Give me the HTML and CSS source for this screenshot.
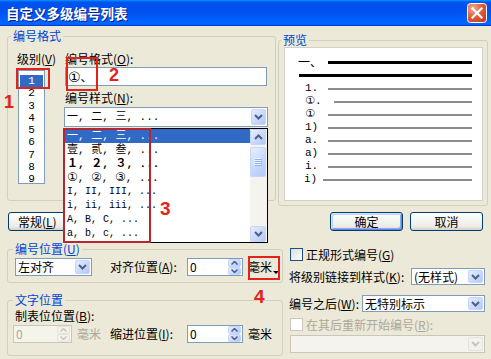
FILE: index.html
```html
<!DOCTYPE html>
<html lang="zh-CN">
<head>
<meta charset="utf-8">
<title>自定义多级编号列表</title>
<link rel="stylesheet" href="styles.css">
</head>
<body>
<div class="window">
  <header class="titlebar">
    <span class="title">自定义多级编号列表</span>
    <span class="close" aria-label="关闭">
      <svg width="20" height="20" viewBox="0 0 20 20"><defs><radialGradient id="cg" cx="0.3" cy="0.25" r="0.95"><stop offset="0" stop-color="#F4B09A"/><stop offset="0.45" stop-color="#E2603F"/><stop offset="1" stop-color="#C2371A"/></radialGradient></defs><rect x="0.5" y="0.5" width="19" height="19" rx="3" fill="url(#cg)" stroke="#fff"/><path d="M5.5 5.5L14.5 14.5M14.5 5.5L5.5 14.5" stroke="#fff" stroke-width="2.2" stroke-linecap="square"/></svg>
    </span>
  </header>
  <main class="client">
    <section class="row-top">
      <div class="group g-format">
        <div class="gtitle">编号格式</div>
        <div class="format-body">
          <div class="level-col">
            <div class="lbl">级别(<u>V</u>)</div>
            <ul class="listbox mono">
              <li class="sel">1</li><li>2</li><li>3</li><li>4</li><li>5</li><li>6</li><li>7</li><li>8</li><li>9</li>
            </ul>
          </div>
          <div class="fmt-col">
            <div class="lbl">编号格式(<u>O</u>):</div>
            <div class="textbox"><span class="circ circ-big">①</span>、</div>
            <div class="lbl lbl-style">编号样式(<u>N</u>):</div>
            <div class="combo">
              <span class="mono cjk-item">一, 二, 三, ...</span>
              <span class="ddbtn"><svg width="9" height="6" viewBox="0 0 9 6"><path d="M1 1l3.5 3.5L8 1" fill="none" stroke="#4D6185" stroke-width="2"/></svg></span>
              <div class="dropdown">
                <ul class="dd-items mono">
                  <li class="sel cjk-item">一, 二, 三, ...</li>
                  <li class="cjk-item">壹, 贰, 叁, ...</li>
                  <li class="cjk-item b">１, ２, ３, ...</li>
                  <li class="cjk-item"><span class="circ">①</span>, <span class="circ">②</span>, <span class="circ">③</span>, ...</li>
                  <li>I, II, III, ...</li>
                  <li>i, ii, iii, ...</li>
                  <li>A, B, C, ...</li>
                  <li>a, b, c, ...</li>
                </ul>
                <div class="vscroll">
                  <span class="sbtn"><svg width="9" height="6" viewBox="0 0 9 6"><path d="M1 5l3.5-3.5L8 5" fill="none" stroke="#4D6185" stroke-width="2"/></svg></span>
                  <span class="thumb"><svg width="8" height="8" viewBox="0 0 8 8"><path d="M0 .5h7M0 2.5h7M0 4.5h7M0 6.5h7" stroke="#EEF4FE"/><path d="M1 1.5h7M1 3.5h7M1 5.5h7M1 7.5h7" stroke="#8CB0F8"/></svg></span>
                  <span class="sbtn sdown"><svg width="9" height="6" viewBox="0 0 9 6"><path d="M1 1l3.5 3.5L8 1" fill="none" stroke="#4D6185" stroke-width="2"/></svg></span>
                </div>
              </div>
            </div>
          </div>
        </div>
      </div>
      <div class="group g-preview">
        <div class="gtitle">预览</div>
        <div class="preview mono">
          <div class="pv-head"><span class="pv-lvl1">一、</span><span class="bar bar-thick"></span></div>
          <div class="bar bar-thick bar-full"></div>
          <div class="prow"><span class="pn">1.</span><span class="bar"></span></div>
          <div class="prow"><span class="pn pn-wide"><span class="circ">①</span>.</span><span class="bar"></span></div>
          <div class="prow"><span class="pn"><span class="circ">①</span></span><span class="bar"></span></div>
          <div class="prow"><span class="pn">1)</span><span class="bar"></span></div>
          <div class="prow"><span class="pn">a.</span><span class="bar"></span></div>
          <div class="prow"><span class="pn">a)</span><span class="bar"></span></div>
          <div class="prow"><span class="pn">i.</span><span class="bar"></span></div>
          <div class="prow prow-last"><span class="pn">i)</span><span class="bar"></span></div>
        </div>
      </div>
    </section>

    <section class="row-btns">
      <button class="btn btn-general">常规(<u>L</u>)</button>
      <button class="btn btn-ok">确定</button>
      <button class="btn btn-cancel">取消</button>
    </section>

    <section class="row-bottom">
      <div class="col-left">
        <div class="group g-numpos">
          <div class="gtitle">编号位置(<u>U</u>)</div>
          <div class="numpos-body">
            <div class="select sel-align"><span>左对齐</span><span class="ddbtn"><svg width="9" height="6" viewBox="0 0 9 6"><path d="M1 1l3.5 3.5L8 1" fill="none" stroke="#4D6185" stroke-width="2"/></svg></span></div>
            <span class="flabel">对齐位置(<u>A</u>):</span>
            <div class="spin"><span class="val">0</span><span class="spinbtns"><span><svg width="7" height="4" viewBox="0 0 7 4"><path d="M.5 3.5l3-3 3 3" fill="none" stroke="#4D6185" stroke-width="1.5"/></svg></span><span><svg width="7" height="4" viewBox="0 0 7 4"><path d="M.5 .5l3 3 3-3" fill="none" stroke="#4D6185" stroke-width="1.5"/></svg></span></span></div>
            <span class="unit unit-dd">毫米</span>
          </div>
        </div>
        <div class="group g-textpos">
          <div class="gtitle">文字位置</div>
          <div class="lbl tab-lbl">制表位位置(<u>B</u>):</div>
          <div class="textpos-row">
            <div class="spin spin-tab disabled"><span class="val">0</span><span class="spinbtns off"><span><svg width="7" height="4" viewBox="0 0 7 4"><path d="M.5 3.5l3-3 3 3" fill="none" stroke="#C9C7BA" stroke-width="1.5"/></svg></span><span><svg width="7" height="4" viewBox="0 0 7 4"><path d="M.5 .5l3 3 3-3" fill="none" stroke="#C9C7BA" stroke-width="1.5"/></svg></span></span></div>
            <span class="unit dis">毫米</span>
            <span class="flabel indent-lbl">缩进位置(<u>I</u>):</span>
            <div class="spin"><span class="val">0</span><span class="spinbtns"><span><svg width="7" height="4" viewBox="0 0 7 4"><path d="M.5 3.5l3-3 3 3" fill="none" stroke="#4D6185" stroke-width="1.5"/></svg></span><span><svg width="7" height="4" viewBox="0 0 7 4"><path d="M.5 .5l3 3 3-3" fill="none" stroke="#4D6185" stroke-width="1.5"/></svg></span></span></div>
            <span class="unit">毫米</span>
          </div>
        </div>
      </div>

      <div class="col-right">
        <div class="chk-row"><span class="chk"></span><span>正规形式编号(<u>G</u>)</span></div>
        <div class="field-row link-row"><span>将级别链接到样式(<u>K</u>):</span><div class="select sel-link"><span>(无样式)</span><span class="ddbtn"><svg width="9" height="6" viewBox="0 0 9 6"><path d="M1 1l3.5 3.5L8 1" fill="none" stroke="#4D6185" stroke-width="2"/></svg></span></div></div>
        <div class="field-row after-row"><span>编号之后(<u>W</u>):</span><div class="select sel-after"><span>无特别标示</span><span class="ddbtn"><svg width="9" height="6" viewBox="0 0 9 6"><path d="M1 1l3.5 3.5L8 1" fill="none" stroke="#4D6185" stroke-width="2"/></svg></span></div></div>
        <div class="chk-row chk-row2"><span class="chk disabled"></span><span class="dis">在其后重新开始编号(<u>R</u>):</span></div>
        <div class="select dis-select"><span></span><span class="ddbtn off"><svg width="9" height="6" viewBox="0 0 9 6"><path d="M1 1l3.5 3.5L8 1" fill="none" stroke="#C9C7BA" stroke-width="2"/></svg></span></div>
      </div>
    </section>
  </main>

  <div class="anno-box b1"></div>
  <div class="anno-box b2"></div>
  <div class="anno-box b3"></div>
  <div class="anno-box b4"></div>
  <span class="anno-num n1">1</span>
  <span class="anno-num n2">2</span>
  <span class="anno-num n3">3</span>
  <span class="anno-num n4">4</span>
</div>
</body>
</html>
```
FILE: styles.css
```css
* { box-sizing: border-box; }
html, body { margin: 0; padding: 0; }
body {
  width: 491px; height: 359px; overflow: hidden;
  background: #ECE9D8; color: #000;
  font-family: "Noto Sans CJK SC", "Noto Sans", sans-serif;
  font-size: 12px; line-height: 14px;
}
ul { list-style: none; margin: 0; padding: 0; }
button { font: inherit; color: inherit; padding: 0; margin: 0; }
u { text-decoration: underline; }
.mono { font-family: "Liberation Mono", "Noto Sans CJK SC", monospace; font-size: 11px; }
.circ { font-family: "DejaVu Sans", "Noto Sans CJK SC", sans-serif; font-size: 12px; line-height: 1; }
.circ-big { font-size: 14px; }
.dis { color: #ACA899; }

.window { position: relative; width: 491px; height: 359px; }

/* title bar */
.titlebar {
  height: 26px; display: flex; align-items: center; justify-content: space-between;
  padding: 0 4px 0 6px;
  background: linear-gradient(180deg, #0997FF 0%, #0053EE 8%, #0050EE 40%, #0066FF 88%, #0066FF 93%, #005BFF 95%, #003DD7 96%, #003DD7 100%);
}
.title { color: #fff; font-weight: 700; font-size: 13.5px; line-height: 16px; text-shadow: 1px 1px 0 #0A1F8A; }
.close { display: block; width: 20px; height: 20px; }
.close svg { display: block; }

/* client */
.client { padding: 0 4px 0 7px; }
.group { border: 1px solid #D0D0BF; border-radius: 3px; }
.gtitle { width: max-content; margin-top: -8px; padding: 0 2px; background: #ECE9D8; color: #0046D5; line-height: 14px; }
.lbl { line-height: 14px; white-space: nowrap; }

.row-top { display: flex; align-items: flex-start; }
.g-format { width: 269px; height: 165px; margin-top: 10px; flex: none; }
.g-format .gtitle { margin-left: 3px; }
.format-body { display: flex; align-items: flex-start; }
.level-col { width: 47px; margin-left: 9px; flex: none; }
.level-col .lbl, .fmt-col .lbl { margin-top: 9px; }
.listbox {
  margin: 4px 0 0 1px; width: 27px; height: 114px;
  border: 1px solid #7F9DB9; background: #fff; padding-top: 4px; text-align: center;
}
.listbox li { height: 12.25px; line-height: 12.25px; }
.listbox li.sel { background: #316AC5; color: #fff; margin: 0 1px; }

.fmt-col { width: 204px; flex: none; }
.fmt-col .lbl { padding-left: 1px; }
.textbox {
  margin: 1px 0 0 1px; width: 202px; height: 19px;
  border: 1px solid #7F9DB9; background: #fff; padding-left: 2px; line-height: 17px;
}
.fmt-col .lbl-style { margin-top: 5px; }
.combo {
  position: relative; margin-top: 2px; height: 20px;
  display: flex; align-items: center;
  border: 1px solid #7F9DB9; background: #fff; padding-left: 2px;
}

.ddbtn {
  flex: none; margin: 1px 1px 1px auto; align-self: stretch; width: 15px;
  border: 1px solid #C5D5FC; border-radius: 2px;
  background: linear-gradient(135deg, #E6EEFE 0%, #CCDAFC 50%, #B4C8F6 100%);
  display: flex; align-items: center; justify-content: center;
}
.ddbtn svg { display: block; }
.ddbtn.off { border-color: #E6E4DA; background: #F3F2EC; }

.dropdown {
  position: absolute; left: -1px; top: 20px; width: 204px; height: 115px;
  border: 1px solid #000; background: #fff; display: flex; z-index: 10;
}
.dd-items { flex: 1; min-width: 0; white-space: nowrap; overflow: hidden; font-size: 10px; }
.dd-items li { height: 14px; line-height: 14px; padding-left: 2px; }
.dd-items li.sel { background: #316AC5; color: #fff; }
.dd-items li.b { font-weight: 700; }
.cjk-item { font-size: 11px; }
.dd-items li.cjk-item { font-size: 11px; }
.vscroll { width: 17px; flex: none; display: flex; flex-direction: column; background: #F4F3EE; padding-right: 1px; }
.sbtn, .thumb {
  display: flex; align-items: center; justify-content: center;
  border: 1px solid #C5D5FC; border-radius: 2px;
  background: linear-gradient(135deg, #E6EEFE 0%, #CCDAFC 50%, #B4C8F6 100%);
}
.sbtn { height: 16px; }
.thumb { height: 30px; margin-top: 2px; }
.sdown { margin-top: auto; }

/* preview */
.g-preview { width: 210px; height: 166px; margin: 14px 0 0 2px; flex: none; }
.g-preview .gtitle { margin-left: 2px; }
.preview {
  margin-left: 5px; width: 199px; height: 154px;
  background: #fff; border: 1px solid #D4D0C8; padding: 8px 10px 0 0;
}
.pv-head { display: flex; align-items: center; height: 12px; padding-left: 13px; }
.pv-lvl1 { width: 30px; flex: none; font-family: "Noto Sans CJK SC", sans-serif; font-size: 12px; }
.bar { flex: 1; height: 2px; background: #8C8C8C; }
.bar-thick { height: 3px; background: #000; }
.bar-full { margin: 6px 0 5px 14px; }
.prow { display: flex; align-items: center; height: 13px; padding-left: 20px; }
.pn { width: 23px; flex: none; line-height: 13px; white-space: nowrap; }
.pn .circ { font-size: 11px; }
.pn-wide { width: 29px; }
.prow-last { padding-left: 19px; }
.prow-last .pn { width: 19px; }

/* buttons */
.row-btns { display: flex; margin: 6px 4px 0 0; height: 19px; }
.btn {
  height: 19px; border: 1px solid #003C74; border-radius: 3px;
  background: linear-gradient(180deg, #FFFFFF 0%, #F6F6F3 40%, #ECEBE6 80%, #D6D0C5 100%);
  display: flex; align-items: center; justify-content: center; line-height: 14px;
}
.btn-general { width: 75px; margin-left: 1px; justify-content: flex-start; padding-left: 9px; }
.btn-ok {
  width: 73px; margin-left: auto;
  box-shadow: inset 1px 1px 0 #CEE7FF, inset -1px -1px 0 #6982EE, inset 2px 2px 0 #BCD4F6, inset -2px -2px 0 #89ADE4;
}
.btn-cancel { width: 73px; margin-left: 7px; }

/* bottom */
.row-bottom { display: flex; align-items: flex-start; }
.col-left { width: 276px; flex: none; }
.g-numpos { margin-top: 18px; height: 34px; }
.g-numpos .gtitle, .g-textpos .gtitle { margin-left: 5px; }
.numpos-body { display: flex; align-items: center; margin-top: 2px; padding-left: 7px; }
.select {
  display: flex; align-items: center; height: 18px;
  border: 1px solid #7F9DB9; background: #fff; padding-left: 2px; white-space: nowrap; flex: none;
}
.sel-align { width: 77px; }
.flabel { white-space: nowrap; flex: none; width: 77px; }
.numpos-body .flabel { margin-left: 18px; }
.spin { display: flex; width: 56px; height: 18px; border: 1px solid #7F9DB9; background: #fff; flex: none; }
.spin .val { flex: 1; padding-left: 2px; line-height: 16px; }
.spinbtns { width: 13px; display: flex; flex-direction: column; margin: 0 1px 0 0; }
.spinbtns span {
  flex: 1; display: flex; align-items: center; justify-content: center;
  border: 1px solid #C5D5FC; border-radius: 2px;
  background: linear-gradient(135deg, #E6EEFE 0%, #CCDAFC 50%, #B4C8F6 100%);
}
.spinbtns svg { display: block; }
.spinbtns.off span { border-color: #E6E4DA; background: #F3F2EC; }
.spin.disabled { border-color: #C9C7BA; background: #F5F4EA; color: #ACA899; }
.unit { margin-left: 5px; white-space: nowrap; flex: none; }
.unit-dd::after {
  content: ""; display: inline-block; margin-left: 1px; vertical-align: -2px;
  border: 3px solid transparent; border-top-color: #000; border-bottom-width: 0;
}

.g-textpos { margin-top: 17px; height: 56px; }
.tab-lbl { margin-top: 2px; padding-left: 7px; }
.textpos-row { display: flex; align-items: center; margin-top: 2px; }
.spin-tab { margin-left: 5px; width: 59px; }
.indent-lbl { margin-left: 9px; }

.col-right { width: 196px; margin-left: 6px; flex: none; }
.chk-row { display: flex; align-items: center; margin-top: 17px; height: 13px; white-space: nowrap; }
.chk {
  width: 13px; height: 13px; flex: none; margin: 0 3px 0 1px;
  border: 1px solid #1C5180; background: linear-gradient(135deg, #DCDCD7, #FFFFFF);
}
.chk.disabled { border-color: #CAC8BB; background: #fff; }
.field-row { display: flex; align-items: center; height: 17px; white-space: nowrap; }
.link-row { margin-top: 7px; }
.after-row { margin-top: 10px; }
.field-row .select { height: 17px; margin-left: auto; }
.sel-link { width: 74px; }
.sel-after { width: 123px; }
.chk-row2 { margin-top: 6px; }
.dis-select { margin: 4px 0 0 1px; width: 195px; border-color: #C9C7BA; background: #F4F3EE; }

/* red annotations (overlay) */
.anno-box { position: absolute; border: 2px solid #E3221B; z-index: 20; }
.b1 { left: 16px; top: 68px; width: 34px; height: 21px; }
.b2 { left: 66px; top: 57px; width: 32px; height: 34px; }
.b3 { left: 63px; top: 128px; width: 88px; height: 115px; border-color: #B8252F; }
.b4 { left: 248px; top: 256px; width: 32px; height: 24px; }
.anno-num { position: absolute; z-index: 20; color: #E3221B; font-family: "Liberation Sans", Arial, sans-serif; font-weight: 700; font-size: 18px; line-height: 14px; }
.n1 { left: 4px; top: 95px; }
.n2 { left: 109px; top: 68px; }
.n3 { left: 160px; top: 202px; font-size: 19px; }
.n4 { left: 254px; top: 290px; font-size: 19px; }
```
